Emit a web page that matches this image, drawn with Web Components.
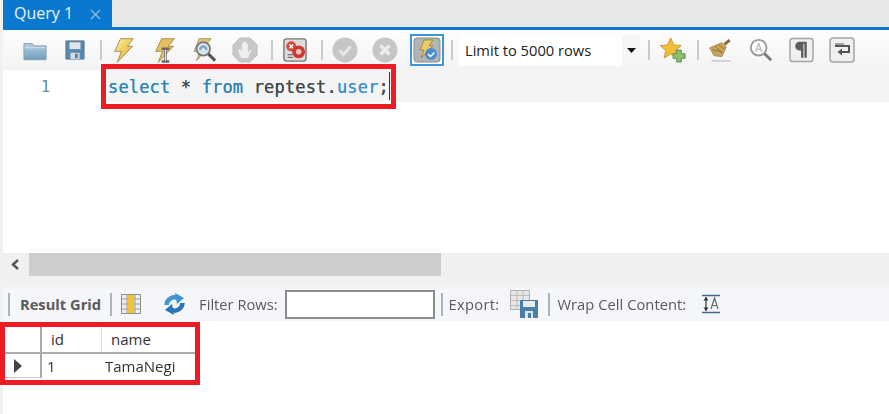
<!DOCTYPE html>
<html>
<head>
<meta charset="utf-8">
<title>Query 1</title>
<style>
  html, body { margin: 0; height: 100%; background: #f1f1f1; }
  body { font-family: "Open Sans", "Liberation Sans", sans-serif; overflow: hidden; }
</style>
</head>
<body>
<wb-app></wb-app>
<script>
(function() {
    const ICONS = {
        folder: `<svg width="24" height="21" viewBox="0 0 26 22"><defs><linearGradient id="f" x1="0" y1="0" x2="0" y2="1"><stop offset="0" stop-color="#b7d0e2"/><stop offset="1" stop-color="#6f9cbc"/></linearGradient></defs><path d="M1 3.500h9l2 2.500h13v15H1z" fill="url(#f)" stroke="#7e9cb3"/><path d="M2 8h22" stroke="#d9e6f0"/></svg>`,
        save: `<svg width="20" height="20" viewBox="0 0 22 22"><path d="M1 1h20v20H1z" fill="#5a89ae" stroke="#4c7495"/><path d="M5 2.500h12V10H5z" fill="#dfe7ed"/><path d="M6 14h10v7H6z" fill="#d5dde3"/><path d="M11 15h3v5h-3z" fill="#59809f"/></svg>`,
        bolt: `<svg width="22" height="27" viewBox="0 0 26 32"><defs><linearGradient id="b" x1="0" y1="0" x2="1" y2="1"><stop offset="0" stop-color="#fff0a0"/><stop offset="1" stop-color="#e0a91c"/></linearGradient></defs><path d="M9 2h15l-7 9h6L5 30l5-13H2z" fill="url(#b)" stroke="#9a8242"/></svg>`,
        boltCursor: `<svg width="22" height="27" viewBox="0 0 26 32"><path d="M9 2h15l-7 9h6L5 30l5-13H2z" fill="#e6c05c" stroke="#9a8242"/><path d="M9 14h9M9 29h9M13.500 14v15" stroke="#666" stroke-width="3" fill="none"/><path d="M13.500 15v13" stroke="#eee" stroke-width="1.200"/></svg>`,
        boltSearch: `<svg width="26" height="27" viewBox="0 0 30 32"><path d="M8 2h14l-6 8h5L5 28l4-11H2z" fill="#e3c677" stroke="#a08c55"/><circle cx="13" cy="14" r="8" fill="#d8e5ee" stroke="#777" stroke-width="2"/><path d="M9 15c2-5 6-5 8 0" fill="none" stroke="#7da8c8" stroke-width="3"/><path d="M19 20l8 8" stroke="#555" stroke-width="3.500"/></svg>`,
        stop: `<svg width="26" height="26" viewBox="0 0 26 26"><path d="M8 1h10l7 7v10l-7 7H8l-7-7V8z" fill="#c8c8c8" stroke="#bbb"/><path d="M8 19l-2-6 2-1 2 2V6h1.500v6V4.500H13V12V5h1.500v7V7H16v9l2-3h1.500L16 21H10z" fill="#eee"/></svg>`,
        stopErr: `<svg width="24" height="26" viewBox="0 0 26 26"><rect x="1" y="1" width="24" height="24" rx="3" fill="#ddd" stroke="#777" stroke-width="1.500"/><path d="M5 18h6M5 21h6" stroke="#777" stroke-width="1.500"/><circle cx="9" cy="9" r="5.500" fill="#d94b3f"/><path d="M7 7l4 4M11 7l-4 4" stroke="#fff" stroke-width="1.500"/><circle cx="17" cy="15" r="7" fill="#cf3a2e"/><circle cx="17" cy="15" r="3" fill="#f2c6c0"/></svg>`,
        check: `<svg width="26" height="26" viewBox="0 0 26 26"><circle cx="13" cy="13" r="12.500" fill="#c6c6c6"/><path d="M7.500 13.500l4 4 7-8" fill="none" stroke="#e8e8e8" stroke-width="3"/></svg>`,
        cross: `<svg width="26" height="26" viewBox="0 0 26 26"><circle cx="13" cy="13" r="12.500" fill="#c6c6c6"/><path d="M8.500 8.500l9 9M17.500 8.500l-9 9" stroke="#ececec" stroke-width="3.500"/></svg>`,
        star: `<svg width="26" height="26" viewBox="0 0 28 28"><path d="M11.500 1l3.300 7.500 8 .8-6 5.300 1.800 8-7.100-4.200-7 4.200 1.700-8-6-5.300 8-.8z" fill="#f0bf35" stroke="#c9962c"/><path d="M18 14h5v4h4v5h-4v4h-5v-4h-4v-5h4z" fill="#8ac06c" stroke="#5c9148"/></svg>`,
        broom: `<svg width="26" height="25" viewBox="0 0 30 28"><path d="M4 26h22" stroke="#cfcfcf" stroke-width="2"/><path d="M2 11l14-6 5 5-5 11-9-1z" fill="#c9a45f" stroke="#a68444"/><path d="M5 13l12 3M8 9l9 8M12 7l7 6" stroke="#8b6d36"/><path d="M19 7l6-5" stroke="#8a6a3a" stroke-width="3.500"/></svg>`,
        findA: `<svg width="24" height="24" viewBox="0 0 26 26"><circle cx="10.500" cy="10.500" r="8.500" fill="#fff" stroke="#9a9a9a" stroke-width="2"/><path d="M7 15l3.500-9 3.500 9M8 12h5" fill="none" stroke="#bbb" stroke-width="1.500"/><path d="M17 17l7 7" stroke="#777" stroke-width="3"/></svg>`,
        para: `<svg width="25" height="26" viewBox="0 0 26 26"><rect x="1" y="1" width="24" height="24" rx="3" fill="#f0f0f0" stroke="#a5a5a5" stroke-width="1.500"/><path d="M18 4.500H11a4.500 4.500 0 0 0 0 9h1.500V21H15V6.500h1V21h2.500V4.500z" fill="#5e5e5e"/></svg>`,
        wrap: `<svg width="26" height="26" viewBox="0 0 26 26"><rect x="1" y="1" width="24" height="24" rx="3" fill="#f0f0f0" stroke="#a5a5a5" stroke-width="1.500"/><path d="M6 9h14v6h-8" fill="none" stroke="#555" stroke-width="2"/><path d="M13 11.500v7L8.500 15z" fill="#555"/><path d="M6 7h9" stroke="#555" stroke-width="1"/></svg>`,
        toggle: `<svg width="34" height="32" viewBox="0 0 34 32"><rect x="1" y="1" width="32" height="30" fill="#fff" stroke="#3c96d8" stroke-width="2"/><rect x="4" y="4" width="26" height="24" rx="3" fill="#b4b4b4" stroke="#8a8a8a"/><path d="M14 6h9l-4 6h4L11 24l3-8h-4z" fill="#eccb68" stroke="#a68b3d"/><circle cx="21" cy="20" r="6" fill="#4a8dd0"/><path d="M18 20l2.500 2.500 4-4" fill="none" stroke="#fff" stroke-width="1.500"/><circle cx="26" cy="7.500" r="1.500" fill="#8ed08e"/></svg>`,
        columns: `<svg width="20" height="20" viewBox="0 0 20 20"><path d="M.5 .5h19v19H.5z" fill="#efefef" stroke="#8a8a8a"/><path d="M.5 5h19M.5 10h19M.5 15h19M6 0v20M14 0v20" stroke="#9a9a9a"/><path d="M7 1h6v18H7z" fill="#f4c430"/></svg>`,
        refresh: `<svg width="25" height="22" viewBox="0 0 25 22"><path d="M4.500 12a8 8 0 0 1 12-6.500" fill="none" stroke="#3f93d6" stroke-width="4.500"/><path d="M13 0l9 5-7 6z" fill="#3f93d6"/><path d="M20.500 10a8 8 0 0 1-12 6.500" fill="none" stroke="#2b76b4" stroke-width="4.500"/><path d="M12 22l-9-5 7-6z" fill="#2b76b4"/></svg>`,
        exportGrid: `<svg width="28" height="28" viewBox="0 0 28 28"><path d="M.5 .5h19v19H.5z" fill="#e8e8e8" stroke="#b0b0b0"/><path d="M.5 5.500h19M.5 10.500h19M.5 15.500h19M7 0v20M13 0v20" stroke="#bbb"/><path d="M10 10h18v18H10z" fill="#4b7fa8"/><path d="M13 11h12v6H13z" fill="#e6ebef"/><path d="M15 21h8v7h-8z" fill="#dfe5ea"/><path d="M18 23h3v5h-3z" fill="#4b7fa8"/></svg>`,
        wrapCell: `<svg width="18" height="20" viewBox="0 0 18 20"><path d="M0 1.500h18M0 18.500h18" stroke="#41688a" stroke-width="1.500"/><path d="M4 3v14" stroke="#333" stroke-width="1.200"/><path d="M4 3l-2.500 3.500h5zM4 17l-2.500-3.500h5z" fill="#333"/><path d="M9 15l3.500-11L16 15M10 11.500h5" fill="none" stroke="#666" stroke-width="1.200"/></svg>`
    };

    // one image button of a toolbar, the gap attribute is its distance to the item before
    class WbTool extends HTMLElement {
        connectedCallback() {
            const root = this.shadowRoot || this.attachShadow({mode: "open"});
            root.innerHTML = `<style>:host { display: flex; align-items: center; flex: none; }</style>${ICONS[this.getAttribute("icon")]}`;
            this.style.marginLeft = (this.getAttribute("gap") || 0) + "px";
        }
    }
    customElements.define("wb-tool", WbTool);

    class WbSep extends HTMLElement {
        constructor() {
            super();
            this.attachShadow({mode: "open"}).innerHTML = `<style>
              :host { display: block; flex: none; width: 2px; height: var(--sep-h, 20px); background: var(--sep, #cacaca); }
            </style>`;
        }
        connectedCallback() {
            this.style.marginLeft = (this.getAttribute("gap") || 0) + "px";
        }
    }
    customElements.define("wb-sep", WbSep);

    class WbTabbar extends HTMLElement {
        constructor() {
            super();
            this.attachShadow({mode: "open"}).innerHTML = `<style>
              :host { display: flex; height: 27px; background: #e8e8e8; border-bottom: 3px solid #0a78cf; }
              .tab { width: 109px; box-sizing: border-box; display: flex; align-items: center; background: #0a78cf; color: #eaf4fb; padding: 0 0 2px 11px; font-size: 16px; }
              .close { margin-left: 17px; width: 11px; height: 11px; margin-top: 4px; }
            </style>
            <div class="tab"><slot></slot>
              <svg class="close" viewBox="0 0 11 11"><path d="M1 1l9 9M10 1l-9 9" stroke="#8fc0e6" stroke-width="1.300"/></svg>
            </div>`;
        }
    }
    customElements.define("wb-tabbar", WbTabbar);

    class WbToolbar extends HTMLElement {
        constructor() {
            super();
            this.attachShadow({mode: "open"}).innerHTML = `<style>
              :host { display: flex; align-items: center; height: 40px; box-sizing: border-box; padding: 0 0 0 20px;
                background: linear-gradient(#fdfdfd, #f3f3f3); }
            </style><slot></slot>`;
        }
    }
    customElements.define("wb-toolbar", WbToolbar);

    class WbSelect extends HTMLElement {
        constructor() {
            super();
            this.attachShadow({mode: "open"}).innerHTML = `<style>
              :host { display: flex; align-items: center; flex: none; width: 181px; height: 31px; box-sizing: border-box;
                background: #fff; padding-left: 6px; font-size: 14.7px; color: #222; }
              .arrow { margin-left: auto; width: 18px; height: 100%; background: #f6f6f6; display: flex; align-items: center; }
              .arrow svg { margin-left: 5px; }
            </style>
            <slot></slot>
            <div class="arrow"><svg width="9" height="5" viewBox="0 0 9 5"><path d="M0 0h9L4.500 5z" fill="#111"/></svg></div>`;
        }
    }
    customElements.define("wb-select", WbSelect);

    class WbEditor extends HTMLElement {
        constructor() {
            super();
            this.attachShadow({mode: "open"}).innerHTML = `<style>
              :host { display: block; height: 183px; background: #fff; }
              .line { display: flex; height: 32px; align-items: center; background: #f4f4f4; }
              .num { width: 105px; flex: none; box-sizing: border-box; height: 100%; padding: 2px 0 0 38px; background: #fff;
                display: flex; align-items: center; color: #5b8fb4; font: 15px "DejaVu Sans Mono", monospace; }
              .code { font: 17px "DejaVu Sans Mono", "Liberation Mono", monospace; letter-spacing: .17px; color: #3f4a52; white-space: pre;
                padding-top: 2px; text-shadow: 0 0 .6px currentColor; }
              .caret { width: 1px; height: 28px; background: #333; flex: none; }
            </style>
            <div class="line"><div class="num">1</div><div class="code"><slot></slot></div><div class="caret"></div></div>`;
        }
    }
    customElements.define("wb-editor", WbEditor);

    class WbScrollbar extends HTMLElement {
        constructor() {
            super();
            this.attachShadow({mode: "open"}).innerHTML = `<style>
              :host { display: flex; height: 23px; background: #f0f0f0; }
              .btn { width: 26px; display: flex; align-items: center; padding-left: 7px; box-sizing: border-box; }
              .thumb { width: 412px; background: #cdcdcd; }
            </style>
            <div class="btn"><svg width="10" height="11" viewBox="0 0 10 11"><path d="M8 1L3 5.500 8 10" fill="none" stroke="#555" stroke-width="2.400"/></svg></div>
            <div class="thumb"></div>`;
        }
    }
    customElements.define("wb-scrollbar", WbScrollbar);

    class WbResultBar extends HTMLElement {
        constructor() {
            super();
            this.attachShadow({mode: "open"}).innerHTML = `<style>
              :host { display: flex; align-items: center; height: 34px; box-sizing: border-box; margin-top: 11px; padding: 0 0 0 5px;
                background: #f5f6fa; font-size: 14.7px; color: #5a5a5a; --sep: #a9b4c0; --sep-h: 23px; }
            </style><slot></slot>`;
        }
    }
    customElements.define("wb-result-bar", WbResultBar);

    class WbLabel extends HTMLElement {
        constructor() {
            super();
            this.attachShadow({mode: "open"}).innerHTML = `<style>
              :host { display: block; flex: none; white-space: nowrap; }
              :host([bold]) { font-weight: 700; }
            </style><slot></slot>`;
        }
        connectedCallback() {
            this.style.marginLeft = (this.getAttribute("gap") || 0) + "px";
        }
    }
    customElements.define("wb-label", WbLabel);

    class WbFilter extends HTMLElement {
        constructor() {
            super();
            this.attachShadow({mode: "open"}).innerHTML = `<style>
              :host { display: block; flex: none; width: 150px; height: 29px; box-sizing: border-box; background: #fff; border: 2px solid #8c8c8c; margin-left: 7px; }
            </style>`;
        }
    }
    customElements.define("wb-filter", WbFilter);

    class WbGrid extends HTMLElement {
        constructor() {
            super();
            this.attachShadow({mode: "open"}).innerHTML = `<style>
              :host { display: block; flex: 1; background: #fff; padding: 5px 0 0 2px; font-size: 15px; color: #333; }
              .row { display: grid; grid-template-columns: 37px 60px 93px; }
              .head { height: 26px; border-bottom: 2px solid #ababab; width: 190px; }
              .body { height: 24px; }
              .cell { display: flex; align-items: center; box-sizing: border-box; border-right: 1px solid #e2e2e2; }
              .first { border-right: 2px solid #a8a8a8; }
              .body .first { border-bottom: 1px solid #c8c8c8; padding-left: 8px; }
              .end { border-right: 0; }
              .h1 { padding-left: 9px; } .h2 { padding-left: 9px; }
              .d1 { padding-left: 5px; } .d2 { padding-left: 3px; }
            </style>
            <div class="row head">
              <div class="cell first"></div><div class="cell h1">id</div><div class="cell h2 end">name</div>
            </div>
            <div class="row body">
              <div class="cell first"><svg width="10" height="14" viewBox="0 0 10 14"><path d="M1 0l8 7-8 7z" fill="#444"/></svg></div>
              <div class="cell d1" style="border-right:0">1</div><div class="cell d2 end">TamaNegi</div>
            </div>`;
        }
    }
    customElements.define("wb-grid", WbGrid);

    // red annotation drawn over the screenshot
    class WbCallout extends HTMLElement {
        constructor() {
            super();
            this.attachShadow({mode: "open"}).innerHTML = `<style>
              :host { display: block; position: absolute; box-sizing: border-box; border: 5px solid #ed1c24; }
            </style>`;
        }
    }
    customElements.define("wb-callout", WbCallout);

    class WbApp extends HTMLElement {
        constructor() {
            super();
            this.attachShadow({mode: "open"}).innerHTML = `<style>
              :host { display: flex; flex-direction: column; position: relative; width: 889px; height: 414px; box-sizing: border-box; padding-left: 3px; overflow: hidden; color: #333; filter: blur(.4px); }
              .kw { color: #2a86b8; } .tbl { color: #3b92cc; }
            </style>
            <wb-tabbar>Query 1</wb-tabbar>
            <wb-toolbar>
              <wb-tool icon="folder"></wb-tool>
              <wb-tool icon="save" gap="18"></wb-tool>
              <wb-sep gap="15"></wb-sep>
              <wb-tool icon="bolt" gap="11"></wb-tool>
              <wb-tool icon="boltCursor" gap="19"></wb-tool>
              <wb-tool icon="boltSearch" gap="16"></wb-tool>
              <wb-tool icon="stop" gap="14"></wb-tool>
              <wb-sep gap="13"></wb-sep>
              <wb-tool icon="stopErr" gap="10"></wb-tool>
              <wb-sep gap="14"></wb-sep>
              <wb-tool icon="check" gap="9"></wb-tool>
              <wb-tool icon="cross" gap="14"></wb-tool>
              <wb-tool icon="toggle" gap="12"></wb-tool>
              <wb-sep gap="7"></wb-sep>
              <wb-select style="margin-left:6px">Limit to 5000 rows</wb-select>
              <wb-sep gap="8"></wb-sep>
              <wb-tool icon="star" gap="10"></wb-tool>
              <wb-sep gap="11"></wb-sep>
              <wb-tool icon="broom" gap="9"></wb-tool>
              <wb-tool icon="findA" gap="15"></wb-tool>
              <wb-tool icon="para" gap="16"></wb-tool>
              <wb-tool icon="wrap" gap="15"></wb-tool>
            </wb-toolbar>
            <wb-editor><span class="kw">select</span> * <span class="kw">from</span> reptest.<span class="tbl">user</span>;</wb-editor>
            <wb-scrollbar></wb-scrollbar>
            <wb-result-bar>
              <wb-sep></wb-sep>
              <wb-label bold gap="10">Result Grid</wb-label>
              <wb-sep gap="9"></wb-sep>
              <wb-tool icon="columns" gap="9"></wb-tool>
              <wb-tool icon="refresh" gap="21"></wb-tool>
              <wb-label gap="12">Filter Rows:</wb-label>
              <wb-filter></wb-filter>
              <wb-sep gap="6"></wb-sep>
              <wb-label gap="6" style="letter-spacing:.3px">Export:</wb-label>
              <wb-tool icon="exportGrid" gap="11"></wb-tool>
              <wb-sep gap="10"></wb-sep>
              <wb-label gap="7" style="letter-spacing:.05px">Wrap Cell Content:</wb-label>
              <wb-tool icon="wrapCell" gap="16"></wb-tool>
            </wb-result-bar>
            <wb-grid></wb-grid>
            <wb-callout style="left:101px;top:64px;width:295px;height:45px"></wb-callout>
            <wb-callout style="left:0;top:322px;width:200px;height:63px"></wb-callout>`;
        }
    }
    customElements.define("wb-app", WbApp);
})();
</script>
</body>
</html>
